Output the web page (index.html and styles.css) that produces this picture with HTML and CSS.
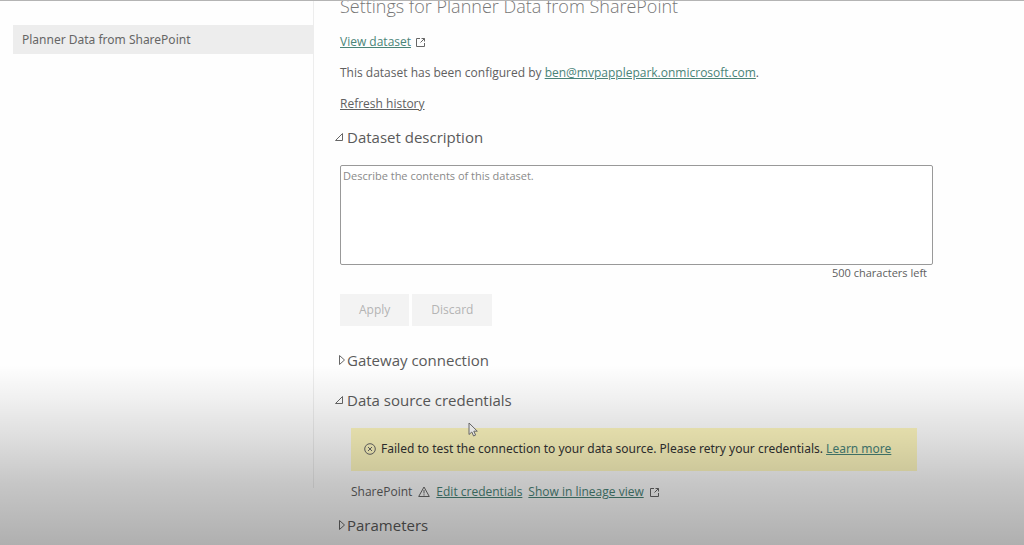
FILE: index.html
```
<!DOCTYPE html>
<html lang="en">
<head>
    <meta charset="UTF-8">
    <meta name="viewport" content="width=device-width, initial-scale=1.0">
    <title>Settings for Planner Data from SharePoint</title>
    <link rel="stylesheet" href="styles.css">
</head>
<body>
    <div class="page">
        <nav class="sidebar">
            <a class="dataset" href="#">Planner Data from SharePoint</a>
        </nav>
        <main class="settings">
            <h1>Settings for Planner Data from SharePoint</h1>
            <p class="line">
                <a href="#">View dataset</a>
                <svg class="external" viewBox="0 0 9 9"><path d="M4 .5H.5v8h8V5M5.500 .5h3v3M8.500 .5l-4 4"/></svg>
            </p>
            <p class="line">This dataset has been configured by <a href="#">ben@mvpapplepark.onmicrosoft.com</a>.</p>
            <p class="line"><a class="history" href="#">Refresh history</a></p>

            <h2><svg class="arrow" viewBox="0 0 10 12"><path d="M.5 9.500h7v-7z"/></svg><label for="description">Dataset description</label></h2>
            <textarea id="description" placeholder="Describe the contents of this dataset."></textarea>
            <div class="counter">500 characters left</div>
            <div class="buttons">
                <button class="button" disabled>Apply</button>
                <button class="button" disabled>Discard</button>
            </div>

            <h2><svg class="arrow" viewBox="0 0 10 12"><path d="M4.500 1.500v9l5-4.500z"/></svg>Gateway connection</h2>
            <h2><svg class="arrow" viewBox="0 0 10 12"><path d="M.5 9.500h7v-7z"/></svg>Data source credentials</h2>
            <div class="alert">
                <svg class="error" viewBox="0 0 12 12"><circle cx="6" cy="6" r="5.300"/><path d="M4 4l4 4M8 4l-4 4"/></svg>
                <span>Failed to test the connection to your data source. Please retry your credentials. <a href="#">Learn more</a></span>
            </div>
            <div class="source">
                <span>SharePoint</span>
                <svg class="warning" viewBox="0 0 12 12"><path d="M6 1L.7 10.500h10.600zM6 4v3.500M6 8.300v1.200"/></svg>
                <a href="#">Edit credentials</a>
                <a href="#">Show in lineage view</a>
                <svg class="external" viewBox="0 0 9 9"><path d="M4 .5H.5v8h8V5M5.500 .5h3v3M8.500 .5l-4 4"/></svg>
            </div>
            <h2><svg class="arrow" viewBox="0 0 10 12"><path d="M4.500 1.500v9l5-4.500z"/></svg>Parameters</h2>
        </main>
    </div>
    <div class="shade"></div>
    <svg class="cursor" viewBox="0 0 10 15"><path d="M1 1v11.500l2.800-2.500 1.800 4 2-.9-1.800-3.900h3.500z"/></svg>
</body>
</html>
```
FILE: styles.css
```
body {
    margin: 0;
    min-height: 100vh;
    overflow: hidden;
    background-color: #fefefe;
    color: #606060;
    font-family: "Open Sans", "Noto Sans", sans-serif;
    font-size: 12px;
    line-height: 20px;
}
.page {
    display: flex;
    height: 100vh;
    box-sizing: border-box;
    border-top: 1px solid #b4b4b4;
    overflow: hidden;
}
.sidebar {
    width: 301px;
    height: 487px;
    flex-shrink: 0;
    box-sizing: border-box;
    padding-top: 24px;
    margin-left: 13px;
    border-right: 1px solid #ededed;
}
.dataset {
    display: block;
    padding: 5px 9px 4px;
    background-color: #ededed;
    color: #666;
    font-family: "Noto Sans", "Open Sans", sans-serif;
    text-decoration: none;
}
.settings {
    flex: 1;
    margin-top: -9px;
    padding: 0 91px 0 26px;
}
h1 {
    margin: 0 0 12px;
    color: #777;
    font-size: 18px;
    font-weight: 300;
    line-height: 28px;
}
h2 {
    display: flex;
    align-items: center;
    margin: 0 0 16px -5px;
    color: #5a5a5a;
    font-size: 15px;
    font-weight: 400;
    line-height: 24px;
}
svg {
    fill: none;
    stroke: #666;
}
.arrow {
    width: 10px;
    height: 12px;
    margin-right: 2px;
}
.line {
    display: flex;
    align-items: center;
    white-space: pre;
    margin: 0 0 11px;
}
a {
    color: #4a8478;
}
.history {
    color: #606060;
}
.external {
    width: 9px;
    height: 9px;
    margin-left: 5px;
}
textarea {
    display: block;
    width: 100%;
    height: 100px;
    box-sizing: border-box;
    padding: 0 2px;
    border: 1px solid #999;
    border-radius: 2px;
    background-color: #fff;
    font: inherit;
    font-size: 11px;
    resize: none;
}
textarea::placeholder {
    color: #8a8a8a;
}
.counter {
    padding-right: 6px;
    margin-bottom: 13px;
    font-size: 11px;
    line-height: 16px;
    text-align: right;
}
.buttons {
    display: flex;
    gap: 3px;
    margin-bottom: 22px;
}
.button {
    height: 32px;
    padding: 0 19px;
    border: none;
    background-color: #f3f3f3;
    color: #b4b4b4;
    font: inherit;
}
.alert {
    display: flex;
    align-items: center;
    gap: 5px;
    margin: 0 16px 11px 11px;
    padding: 11px 13px 12px;
    background-color: #fff8c0;
    color: #333;
    font-family: "Noto Sans", "Open Sans", sans-serif;
}
.error,
.warning {
    width: 12px;
    height: 12px;
    flex-shrink: 0;
}
.source {
    display: flex;
    align-items: center;
    gap: 6px;
    margin: 0 0 11px 11px;
}
.source .external {
    margin-left: 0;
}
/* darkens the lower part of the page */
.shade {
    position: absolute;
    left: 0;
    right: 0;
    bottom: 0;
    height: 180px;
    background: linear-gradient(rgba(0, 0, 0, 0), rgba(0, 0, 0, 0.06) 20%, rgba(0, 0, 0, 0.13) 41%, rgba(0, 0, 0, 0.22) 66%, rgba(0, 0, 0, 0.31));
    pointer-events: none;
}
.cursor {
    position: absolute;
    left: 468px;
    top: 422px;
    width: 10px;
    height: 15px;
    fill: #e4e4e4;
}
```
